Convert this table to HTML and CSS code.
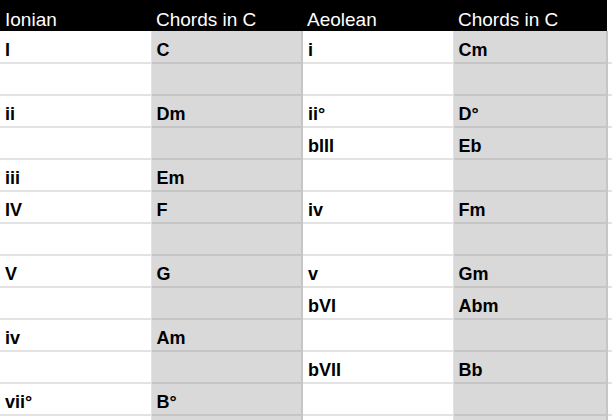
FILE: index.html
```html
<!DOCTYPE html>
<html>
<head>
<meta charset="utf-8">
<link rel="stylesheet" href="styles.css">
</head>
<body>
<table class="grid">
  <colgroup>
    <col class="c1"><col class="c2"><col class="c3"><col class="c4"><col class="c5">
  </colgroup>
  <thead>
    <tr><th>Ionian</th><th>Chords in C</th><th>Aeolean</th><th>Chords in C</th><th class="x"></th></tr>
  </thead>
  <tbody>
    <tr><td>I</td><td class="g">C</td><td>i</td><td class="g">Cm</td><td class="x"></td></tr>
    <tr><td></td><td class="g"></td><td></td><td class="g"></td><td class="x"></td></tr>
    <tr><td>ii</td><td class="g">Dm</td><td>ii°</td><td class="g">D°</td><td class="x"></td></tr>
    <tr><td></td><td class="g"></td><td>bIII</td><td class="g">Eb</td><td class="x"></td></tr>
    <tr><td>iii</td><td class="g">Em</td><td></td><td class="g"></td><td class="x"></td></tr>
    <tr><td>IV</td><td class="g">F</td><td>iv</td><td class="g">Fm</td><td class="x"></td></tr>
    <tr><td></td><td class="g"></td><td></td><td class="g"></td><td class="x"></td></tr>
    <tr><td>V</td><td class="g">G</td><td>v</td><td class="g">Gm</td><td class="x"></td></tr>
    <tr><td></td><td class="g"></td><td>bVI</td><td class="g">Abm</td><td class="x"></td></tr>
    <tr><td>iv</td><td class="g">Am</td><td></td><td class="g"></td><td class="x"></td></tr>
    <tr><td></td><td class="g"></td><td>bVII</td><td class="g">Bb</td><td class="x"></td></tr>
    <tr><td>vii°</td><td class="g">B°</td><td></td><td class="g"></td><td class="x"></td></tr>
    <tr><td></td><td class="g"></td><td></td><td class="g"></td><td class="x"></td></tr>
  </tbody>
</table>
</body>
</html>
```
FILE: styles.css
```css
html, body {
  margin: 0;
  padding: 0;
  background: #ffffff;
}
body {
  font-family: "Liberation Sans", Arial, sans-serif;
  overflow: hidden;
}
.grid {
  border-collapse: collapse;
  table-layout: fixed;
  width: 612px;
}
.c1 { width: 151px; }
.c2 { width: 151px; }
.c3 { width: 151px; }
.c4 { width: 154px; }
.c5 { width: 5px; }
.grid th {
  background: #000000;
  color: #ffffff;
  font-weight: normal;
  font-size: 19px;
  text-align: left;
  height: 31px;
  padding: 0 0 0 5px;
  box-sizing: border-box;
  vertical-align: bottom;
  border: none;
}
.grid th.x {
  background: #ffffff;
  padding: 0;
}
.grid td {
  height: 32px;
  box-sizing: border-box;
  padding: 0 0 1px 5px;
  font-size: 18px;
  font-weight: bold;
  color: #000;
  vertical-align: bottom;
  border-bottom: 2px solid #e3e3e3;
  border-right: 1px solid #e3e3e3;
  background: #ffffff;
}
.grid td.g {
  background: #d9d9d9;
  border-bottom-color: #c6c6c6;
  border-right: 2px solid #c6c6c6;
  border-left: 1px solid #e3e3e3;
}
.grid td.x {
  padding: 0;
  border-right: none;
}
```
